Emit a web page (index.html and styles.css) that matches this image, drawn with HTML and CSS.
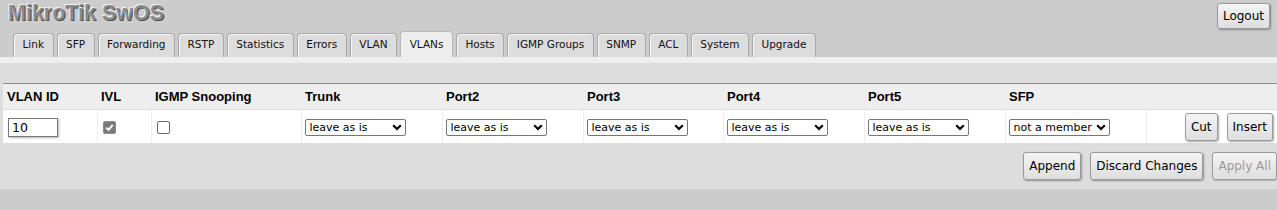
FILE: index.html
```html
<!DOCTYPE html>
<html>
<head>
<meta charset="utf-8">
<title>MikroTik SwOS</title>
<link rel="stylesheet" href="styles.css">
</head>
<body>
<div class="top">
  <div class="title">MikroTik SwOS</div>
  <button class="btn logout">Logout</button>
</div>
<div class="tabs">
  <div class="tab">Link</div>
  <div class="tab">SFP</div>
  <div class="tab">Forwarding</div>
  <div class="tab">RSTP</div>
  <div class="tab">Statistics</div>
  <div class="tab">Errors</div>
  <div class="tab">VLAN</div>
  <div class="tab active">VLANs</div>
  <div class="tab">Hosts</div>
  <div class="tab">IGMP Groups</div>
  <div class="tab">SNMP</div>
  <div class="tab">ACL</div>
  <div class="tab">System</div>
  <div class="tab">Upgrade</div>
</div>
<div class="strip"></div>
<div class="toolbar"></div>
<div class="panel">
  <table class="grid">
    <colgroup>
      <col class="c-id"><col class="c-ivl"><col class="c-igmp"><col class="c-port"><col class="c-port"><col class="c-port3"><col class="c-port"><col class="c-port"><col class="c-port"><col class="c-act">
    </colgroup>
    <thead>
      <tr class="head">
        <th>VLAN ID</th><th>IVL</th><th>IGMP Snooping</th><th>Trunk</th><th>Port2</th><th>Port3</th><th>Port4</th><th>Port5</th><th>SFP</th><th></th>
      </tr>
    </thead>
    <tbody>
      <tr class="row">
        <td><input class="idbox" type="text" value="10"></td>
        <td><input class="chk" type="checkbox" checked disabled></td>
        <td><input class="chk" type="checkbox"></td>
        <td><select class="sel"><option>leave as is</option></select></td>
        <td><select class="sel"><option>leave as is</option></select></td>
        <td><select class="sel"><option>leave as is</option></select></td>
        <td><select class="sel"><option>leave as is</option></select></td>
        <td><select class="sel"><option>leave as is</option></select></td>
        <td><select class="sel"><option>not a member</option></select></td>
        <td class="acts"><button class="btn">Cut</button><button class="btn">Insert</button></td>
      </tr>
    </tbody>
  </table>
  <div class="footer">
    <button class="btn">Append</button>
    <button class="btn">Discard Changes</button>
    <button class="btn" disabled>Apply All</button>
  </div>
</div>
</body>
</html>
```

FILE: styles.css
```css
html, body {
  margin: 0;
  padding: 0;
}
body {
  background: #cccccc;
  font-family: "DejaVu Sans", Verdana, sans-serif;
  font-size: 12px;
  color: #000;
  overflow: hidden;
}
.top {
  height: 31px;
  display: flex;
  justify-content: space-between;
  align-items: flex-start;
}
.title {
  margin-left: 8px;
  margin-top: 1px;
  font-family: "Liberation Sans", Arial, sans-serif;
  font-weight: bold;
  font-size: 21.5px;
  line-height: 24px;
  color: #8a8a8a;
  text-shadow: -1px -1px 0 #f4f4f4, 1px 1px 0 #4a4a4a;
}
.btn {
  font-family: "DejaVu Sans", Verdana, sans-serif;
  font-size: 12px;
  color: #000;
  height: 28px;
  padding: 0 5px;
  border: 1px solid #9a9a9a;
  border-radius: 3px;
  background: linear-gradient(#f4f4f4, #dedede);
  box-shadow: 1px 1px 2px rgba(0,0,0,0.35);
  margin: 0;
}
.btn:disabled {
  color: #9a9a9a;
  box-shadow: 1px 1px 1px rgba(0,0,0,0.2);
}
.logout {
  height: 26px;
  margin-top: 3px;
  margin-right: 7px;
}
.tabs {
  display: flex;
  align-items: flex-end;
  gap: 3px;
  padding-left: 13px;
  height: 26px;
}
.tab {
  font-size: 10.5px;
  line-height: 20px;
  padding: 0 8.5px 3px 8.5px;
  border: 1px solid #a8a8a8;
  border-bottom: none;
  border-radius: 4px 4px 0 0;
  background: #dcdcdc;
  box-shadow: inset 1px 1px 0 #f6f6f6;
  color: #111;
}
.tab.active {
  background: #eeeeee;
  padding-top: 2px;
  box-shadow: none;
  border-color: #b8b8b8;
}
.strip {
  height: 6px;
  background: #eeeeee;
}
.toolbar {
  height: 20px;
  background: #dddddd;
}
.panel {
  background: #dddddd;
  padding-left: 3px;
}
.grid {
  border-collapse: collapse;
  table-layout: fixed;
  width: 1274px;
}
.c-id { width: 94px; }
.c-ivl { width: 54px; }
.c-igmp { width: 150px; }
.c-port { width: 141px; }
.c-port3 { width: 140px; }
.c-act { width: 131px; }
.head th {
  background: #eeeeee;
  border-top: 1px solid #8c8c8c;
  border-bottom: 1px solid #dddddd;
  height: 25px;
  padding: 0 4px;
  text-align: left;
  font-family: "Liberation Sans", Arial, sans-serif;
  font-size: 13px;
  font-weight: bold;
  vertical-align: middle;
}
.row td {
  background: #ffffff;
  height: 33px;
  padding: 0 4px;
  border-left: 1px solid #eeeeee;
  vertical-align: middle;
}
.row td:first-child {
  border-left: none;
}
.idbox {
  box-sizing: border-box;
  width: 50px;
  height: 19px;
  margin: 2px 0 0 1px;
  padding: 0 3px;
  border: 1px solid #777;
  box-shadow: 1px 1px 2px rgba(0,0,0,0.3);
  font-family: "DejaVu Sans", Verdana, sans-serif;
  font-size: 12.5px;
}
.chk {
  appearance: none;
  -webkit-appearance: none;
  box-sizing: border-box;
  width: 13px;
  height: 13px;
  margin: 2px 0 0 1px;
  border: 1px solid #6a6a6a;
  border-radius: 2px;
  background: #ffffff;
  vertical-align: middle;
}
.chk:checked {
  border-color: #8c8c8c;
  background: #7a7a7a url("data:image/svg+xml,%3Csvg xmlns='http://www.w3.org/2000/svg' width='11' height='11' viewBox='0 0 11 11'%3E%3Cpath d='M2.2 5.6 L4.5 7.9 L8.8 2.8' fill='none' stroke='%23ffffff' stroke-width='1.9'/%3E%3C/svg%3E") no-repeat center;
}
.sel {
  appearance: none;
  -webkit-appearance: none;
  box-sizing: border-box;
  width: 101px;
  height: 17px;
  margin: 2px 0 0 -1px;
  padding: 0 0 0 4px;
  font-family: "DejaVu Sans", Verdana, sans-serif;
  font-size: 11px;
  line-height: 15px;
  border: 1px solid #767676;
  border-radius: 2px;
  background: #fff url("data:image/svg+xml,%3Csvg xmlns='http://www.w3.org/2000/svg' width='10' height='7' viewBox='0 0 10 7'%3E%3Cpath d='M1.2 1.2 L5 5 L8.8 1.2' fill='none' stroke='%23000000' stroke-width='2.2'/%3E%3C/svg%3E") no-repeat right 3px center;
  color: #000;
}
.acts {
  text-align: right;
}
.acts .btn {
  margin-left: 9px;
}
.footer {
  height: 46px;
  display: flex;
  justify-content: flex-end;
  align-items: flex-start;
  gap: 9px;
  padding-top: 9px;
  box-sizing: border-box;
}
```
